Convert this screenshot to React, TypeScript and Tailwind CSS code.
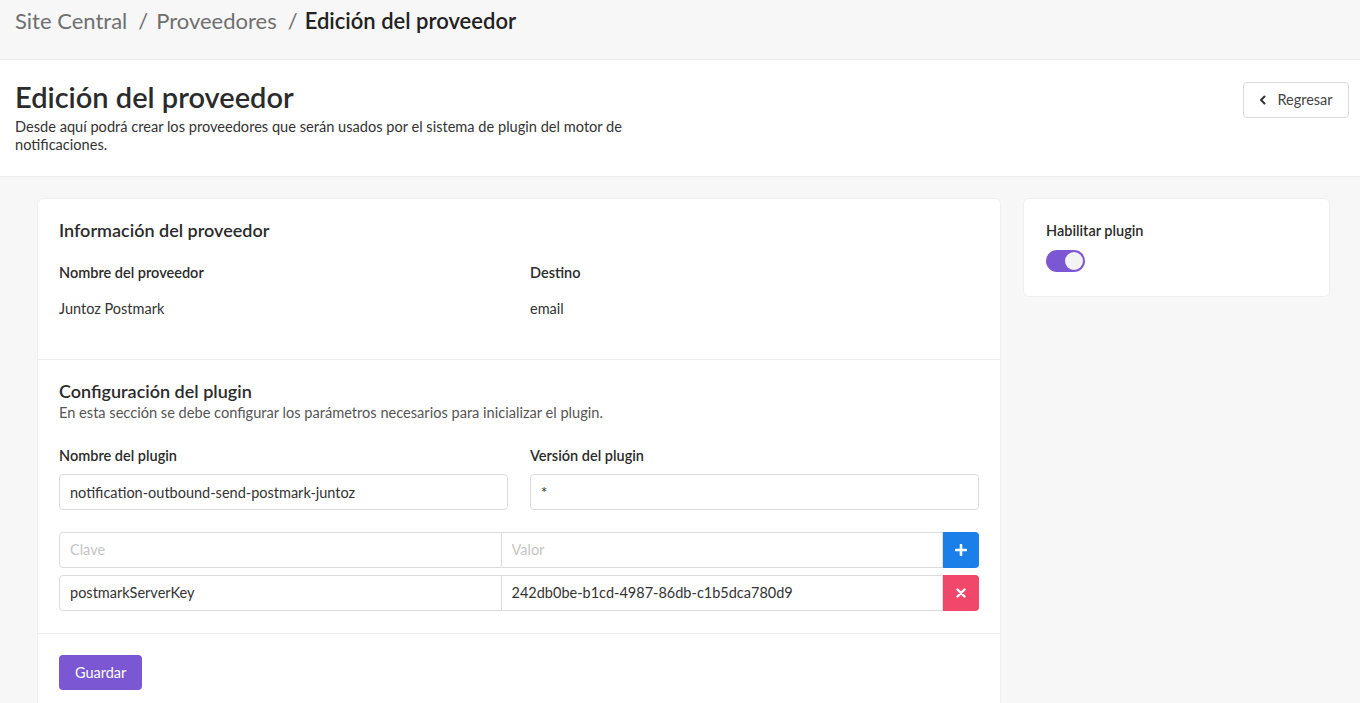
import React from 'react';

const font = { fontFamily: 'Lato, "Noto Sans", sans-serif' };

const Field: React.FC<{ label: string; value: string }> = ({ label, value }) => (
  <div className="flex flex-col">
    <label className="text-[14.5px] font-semibold text-[#2b2b2b] leading-[20px] mb-[8px]">{label}</label>
    <input
      readOnly
      value={value}
      className="h-[36px] rounded-[4px] border border-[#dcdcdc] bg-white px-[10px] text-[14.5px] text-[#333] outline-none"
    />
  </div>
);

const KeyValueRow: React.FC<{ k: string; v: string; kind: 'add' | 'remove' }> = ({ k, v, kind }) => (
  <div className="flex h-[36px]">
    <input
      readOnly
      value={k}
      placeholder="Clave"
      className="flex-1 min-w-0 rounded-l-[4px] border border-[#dcdcdc] bg-white px-[10px] text-[14.5px] text-[#333] placeholder:text-[#c4c4c4] outline-none"
    />
    <input
      readOnly
      value={v}
      placeholder="Valor"
      className="flex-1 min-w-0 border border-l-0 border-[#dcdcdc] bg-white px-[10px] text-[14.5px] text-[#333] placeholder:text-[#c4c4c4] outline-none"
    />
    <button
      className={`w-[36px] shrink-0 rounded-r-[4px] flex items-center justify-center text-white ${
        kind === 'add' ? 'bg-[#1b7fea]' : 'bg-[#f1476b]'
      }`}
    >
      {kind === 'add' ? (
        <svg width="12" height="12" viewBox="0 0 12 12">
          <path d="M6 1v10M1 6h10" stroke="white" strokeWidth="2.6" strokeLinecap="round" />
        </svg>
      ) : (
        <svg width="10" height="10" viewBox="0 0 10 10">
          <path d="M1.5 1.5l7 7M8.5 1.5l-7 7" stroke="white" strokeWidth="2.4" strokeLinecap="round" />
        </svg>
      )}
    </button>
  </div>
);

export default function App() {
  return (
    <div style={font} className="min-h-[703px] bg-[#f7f7f7] text-[#2b2b2b]">
      {/* breadcrumb */}
      <div className="h-[60px] border-b border-[#ececec] bg-[#f7f7f7] px-[15px] pt-[6px]">
        <div className="flex items-center text-[22px] leading-[30px]">
          <span className="text-[#6f6f6f]">Site Central</span>
          <span className="ml-[11px] mr-[8px] text-[#6f6f6f]">/</span>
          <span className="text-[#6f6f6f]">Proveedores</span>
          <span className="ml-[11px] mr-[7px] text-[#6f6f6f]">/</span>
          <span className="font-semibold text-[#222]">Edición del proveedor</span>
        </div>
      </div>

      {/* header */}
      <div className="flex justify-between border-b border-[#ececec] bg-white px-[15px] pt-[19px] pb-[22px]">
        <div className="w-[650px]">
          <h1 className="text-[29px] font-semibold leading-[36px] text-[#2b2b2b]">Edición del proveedor</h1>
          <p className="mt-[3px] text-[14.6px] leading-[18px] text-[#333]">
            Desde aquí podrá crear los proveedores que serán usados por el sistema de plugin del motor de notificaciones.
          </p>
        </div>
        <div className="pt-[3px]">
          <button className="flex h-[36px] w-[106px] items-center justify-center gap-[10px] rounded-[4px] border border-[#dcdcdc] bg-white text-[14.5px] text-[#444] mr-[-4px]">
            <svg width="8" height="10" viewBox="0 0 8 10">
              <path d="M5.5 1.5L2 5l3.5 3.5" fill="none" stroke="#333" strokeWidth="2" strokeLinecap="round" strokeLinejoin="round" />
            </svg>
            Regresar
          </button>
        </div>
      </div>

      {/* body */}
      <div className="flex items-start gap-[22px] pl-[37px] pr-[30px] pt-[21px]">
        <div className="flex-1 rounded-[6px] border border-[#efefef] bg-white">
          <div className="border-b border-[#efefef] px-[21px] pt-[19px] pb-[40px]">
            <h2 className="text-[18px] font-semibold leading-[24px] text-[#2b2b2b]">Información del proveedor</h2>
            <div className="mt-[21px] grid grid-cols-2 gap-[22px]">
              <div>
                <div className="text-[14.5px] font-semibold leading-[20px]">Nombre del proveedor</div>
                <div className="mt-[16px] text-[14.5px] leading-[20px] text-[#333]">Juntoz Postmark</div>
              </div>
              <div>
                <div className="text-[14.5px] font-semibold leading-[20px]">Destino</div>
                <div className="mt-[16px] text-[14.5px] leading-[20px] text-[#333]">email</div>
              </div>
            </div>
          </div>

          <div className="border-b border-[#efefef] px-[21px] pt-[19px] pb-[22px]">
            <h2 className="text-[18px] font-semibold leading-[24px] text-[#2b2b2b]">Configuración del plugin</h2>
            <p className="mt-[1px] text-[14.6px] leading-[18px] text-[#555]">
              En esta sección se debe configurar los parámetros necesarios para inicializar el plugin.
            </p>
            <div className="mt-[24px] grid grid-cols-2 gap-[22px]">
              <Field label="Nombre del plugin" value="notification-outbound-send-postmark-juntoz" />
              <Field label="Versión del plugin" value="*" />
            </div>
            <div className="mt-[22px] flex flex-col gap-[7px]">
              <KeyValueRow k="" v="" kind="add" />
              <KeyValueRow k="postmarkServerKey" v="242db0be-b1cd-4987-86db-c1b5dca780d9" kind="remove" />
            </div>
          </div>

          <div className="px-[21px] pt-[21px] pb-[30px]">
            <button className="h-[35px] rounded-[4px] bg-[#7b57d3] px-[16px] text-[14.5px] text-white">Guardar</button>
          </div>
        </div>

        <div className="w-[307px] rounded-[6px] border border-[#efefef] bg-white px-[22px] pt-[22px] pb-[24px]">
          <div className="text-[14.5px] font-semibold leading-[20px]">Habilitar plugin</div>
          <div className="mt-[9px] flex h-[22px] w-[39px] items-center justify-end rounded-full bg-[#7b57d3] pr-[2px]">
            <div className="h-[18px] w-[18px] rounded-full bg-[#f3f3f3]" />
          </div>
        </div>
      </div>
    </div>
  );
}
